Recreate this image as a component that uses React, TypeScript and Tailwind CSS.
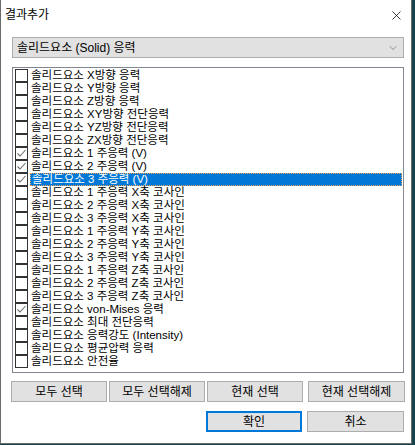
import { ChevronDown, X } from 'lucide-react';

const items = [
  { label: '솔리드요소 X방향 응력' },
  { label: '솔리드요소 Y방향 응력' },
  { label: '솔리드요소 Z방향 응력' },
  { label: '솔리드요소 XY방향 전단응력' },
  { label: '솔리드요소 YZ방향 전단응력' },
  { label: '솔리드요소 ZX방향 전단응력' },
  { label: '솔리드요소 1 주응력 (V)', checked: true },
  { label: '솔리드요소 2 주응력 (V)', checked: true },
  { label: '솔리드요소 3 주응력 (V)', checked: true, selected: true },
  { label: '솔리드요소 1 주응력 X축 코사인' },
  { label: '솔리드요소 2 주응력 X축 코사인' },
  { label: '솔리드요소 3 주응력 X축 코사인' },
  { label: '솔리드요소 1 주응력 Y축 코사인' },
  { label: '솔리드요소 2 주응력 Y축 코사인' },
  { label: '솔리드요소 3 주응력 Y축 코사인' },
  { label: '솔리드요소 1 주응력 Z축 코사인' },
  { label: '솔리드요소 2 주응력 Z축 코사인' },
  { label: '솔리드요소 3 주응력 Z축 코사인' },
  { label: '솔리드요소 von-Mises 응력', checked: true },
  { label: '솔리드요소 최대 전단응력' },
  { label: '솔리드요소 응력강도 (Intensity)' },
  { label: '솔리드요소 평균압력 응력' },
  { label: '솔리드요소 안전율' },
];

function CheckBox({ checked }: { checked?: boolean }) {
  return (
    <div className="flex h-[13px] w-[13px] shrink-0 items-center justify-center border border-[#333333] bg-white">
      {checked && (
        <svg width="9" height="9" viewBox="0 0 9 9" fill="none">
          <path d="M0.5 4.5 L3 7 L8.5 1" stroke="#707070" strokeWidth="1.1" />
        </svg>
      )}
    </div>
  );
}

function Btn({ children, className = '' }: { children: React.ReactNode; className?: string }) {
  return (
    <button className={`flex h-[21px] items-center justify-center border border-[#adadad] bg-[#e1e1e1] text-[12px] text-black ${className}`}>
      {children}
    </button>
  );
}

export default function App() {
  return (
    <div
      className="h-[445px] w-[415px] overflow-hidden bg-[#17434c] text-black"
      style={{ fontFamily: '"Liberation Sans", "Noto Sans CJK KR", sans-serif' }}
    >
      <div className="flex h-[444px] w-[412px] flex-col border-x border-b border-[#6a6a6a] bg-white">
        <div className="flex h-[30px] shrink-0 items-center justify-between pl-[4px] pr-[7px]">
          <span className="text-[12px] leading-none">결과추가</span>
          <X className="h-[15px] w-[15px] text-black" strokeWidth={1.2} />
        </div>

        <div className="ml-[11px] mt-[7px] flex h-[21px] w-[392px] items-center justify-between border border-[#adadad] bg-[#e1e1e1] pl-[4px] pr-[4px]">
          <span className="text-[12px] leading-none">솔리드요소 (Solid) 응력</span>
          <ChevronDown className="h-[12px] w-[12px] text-[#606060]" strokeWidth={1.3} />
        </div>

        <div className="ml-[11px] mt-[9px] h-[306px] w-[392px] border border-[#828790] bg-white pl-[2px] pt-[1px]">
          {items.map((it) => (
            <div key={it.label} className="flex h-[13px] items-center">
              <CheckBox checked={it.checked} />
              <div
                className={`ml-[2px] flex h-[13px] items-center pl-px text-[11.5px] leading-none ${
                  it.selected
                    ? 'w-[372px] border border-dotted border-[#f0a050] bg-[#0078d7] text-white'
                    : ''
                }`}
              >
                {it.label}
              </div>
            </div>
          ))}
        </div>

        <div className="ml-[10px] mt-[8px] flex">
          <Btn className="w-[96px]">모두 선택</Btn>
          <Btn className="ml-[2px] w-[96px]">모두 선택해제</Btn>
          <Btn className="ml-[2px] w-[96px]">현재 선택</Btn>
          <Btn className="ml-[5px] w-[97px]">현재 선택해제</Btn>
        </div>

        <div className="ml-[205px] mt-[9px] flex">
          <button className="flex h-[21px] w-[96px] items-center justify-center border-2 border-[#0078d7] bg-[#e1e1e1] text-[12px]">
            확인
          </button>
          <Btn className="ml-[5px] w-[97px]">취소</Btn>
        </div>
      </div>
    </div>
  );
}
